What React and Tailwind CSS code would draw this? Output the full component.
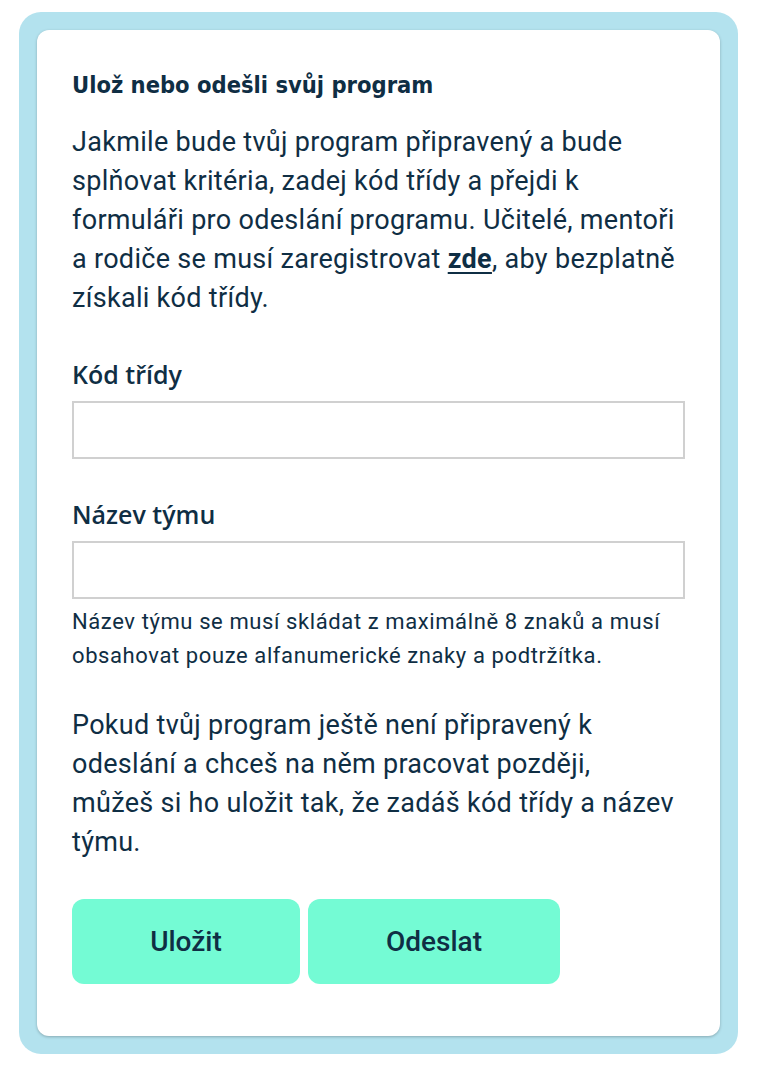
export default function App() {
    return (
        <div className="bg-white min-h-screen pt-[12px] pl-[19px] font-['Roboto',sans-serif] text-[#0f2e44]">
            <div className="w-[719px] bg-[#b3e2ee] rounded-[22px] p-[18px]">
                <div className="bg-white rounded-[12px] shadow-[0_1px_3px_rgba(0,0,0,0.25)] pt-[40px] pb-[52px] pl-[35px] pr-[20px]">
                    <h2 className="font-['DejaVu_Sans_Condensed','DejaVu_Sans',sans-serif] font-bold text-[23.5px] leading-[30px]">
                        Ulož nebo odešli svůj program
                    </h2>
                    <p className="mt-[23px] text-[27px] leading-[39px] tracking-[0.3px] whitespace-nowrap">
                        Jakmile bude tvůj program připravený a bude<br />
                        splňovat kritéria, zadej kód třídy a přejdi k<br />
                        formuláři pro odeslání programu. Učitelé, mentoři<br />
                        a rodiče se musí zaregistrovat{" "}
                        <a href="#" className="font-bold underline underline-offset-[4px]">zde</a>, aby bezplatně<br />
                        získali kód třídy.
                    </p>
                    <div className="mr-[15px]">
                        <label className="block mt-[40px] font-['Open_Sans',sans-serif] text-[25px] leading-[32px] font-semibold">Kód třídy</label>
                        <input type="text" className="block mt-[11px] w-full h-[58px] border-2 border-[#d0d0d0] outline-none" />
                        <label className="block mt-[39px] font-['Open_Sans',sans-serif] text-[25px] leading-[32px] font-semibold">Název týmu</label>
                        <input type="text" className="block mt-[11px] w-full h-[58px] border-2 border-[#d0d0d0] outline-none" />
                        <p className="mt-[6px] text-[22px] leading-[34px] tracking-[0.6px] whitespace-nowrap">
                            Název týmu se musí skládat z maximálně 8 znaků a musí<br />
                            obsahovat pouze alfanumerické znaky a podtržítka.
                        </p>
                    </div>
                    <p className="mt-[33px] text-[27px] leading-[39px] tracking-[0.3px] whitespace-nowrap">
                        Pokud tvůj program ještě není připravený k<br />
                        odeslání a chceš na něm pracovat později,<br />
                        můžeš si ho uložit tak, že zadáš kód třídy a název<br />
                        týmu.
                    </p>
                    <div className="flex gap-[8px] mt-[37px]">
                        <button className="w-[228px] h-[85px] rounded-[12px] bg-[#74fbd4] text-[28px] font-medium">Uložit</button>
                        <button className="w-[252px] h-[85px] rounded-[12px] bg-[#74fbd4] text-[28px] font-medium">Odeslat</button>
                    </div>
                </div>
            </div>
        </div>
    );
}
